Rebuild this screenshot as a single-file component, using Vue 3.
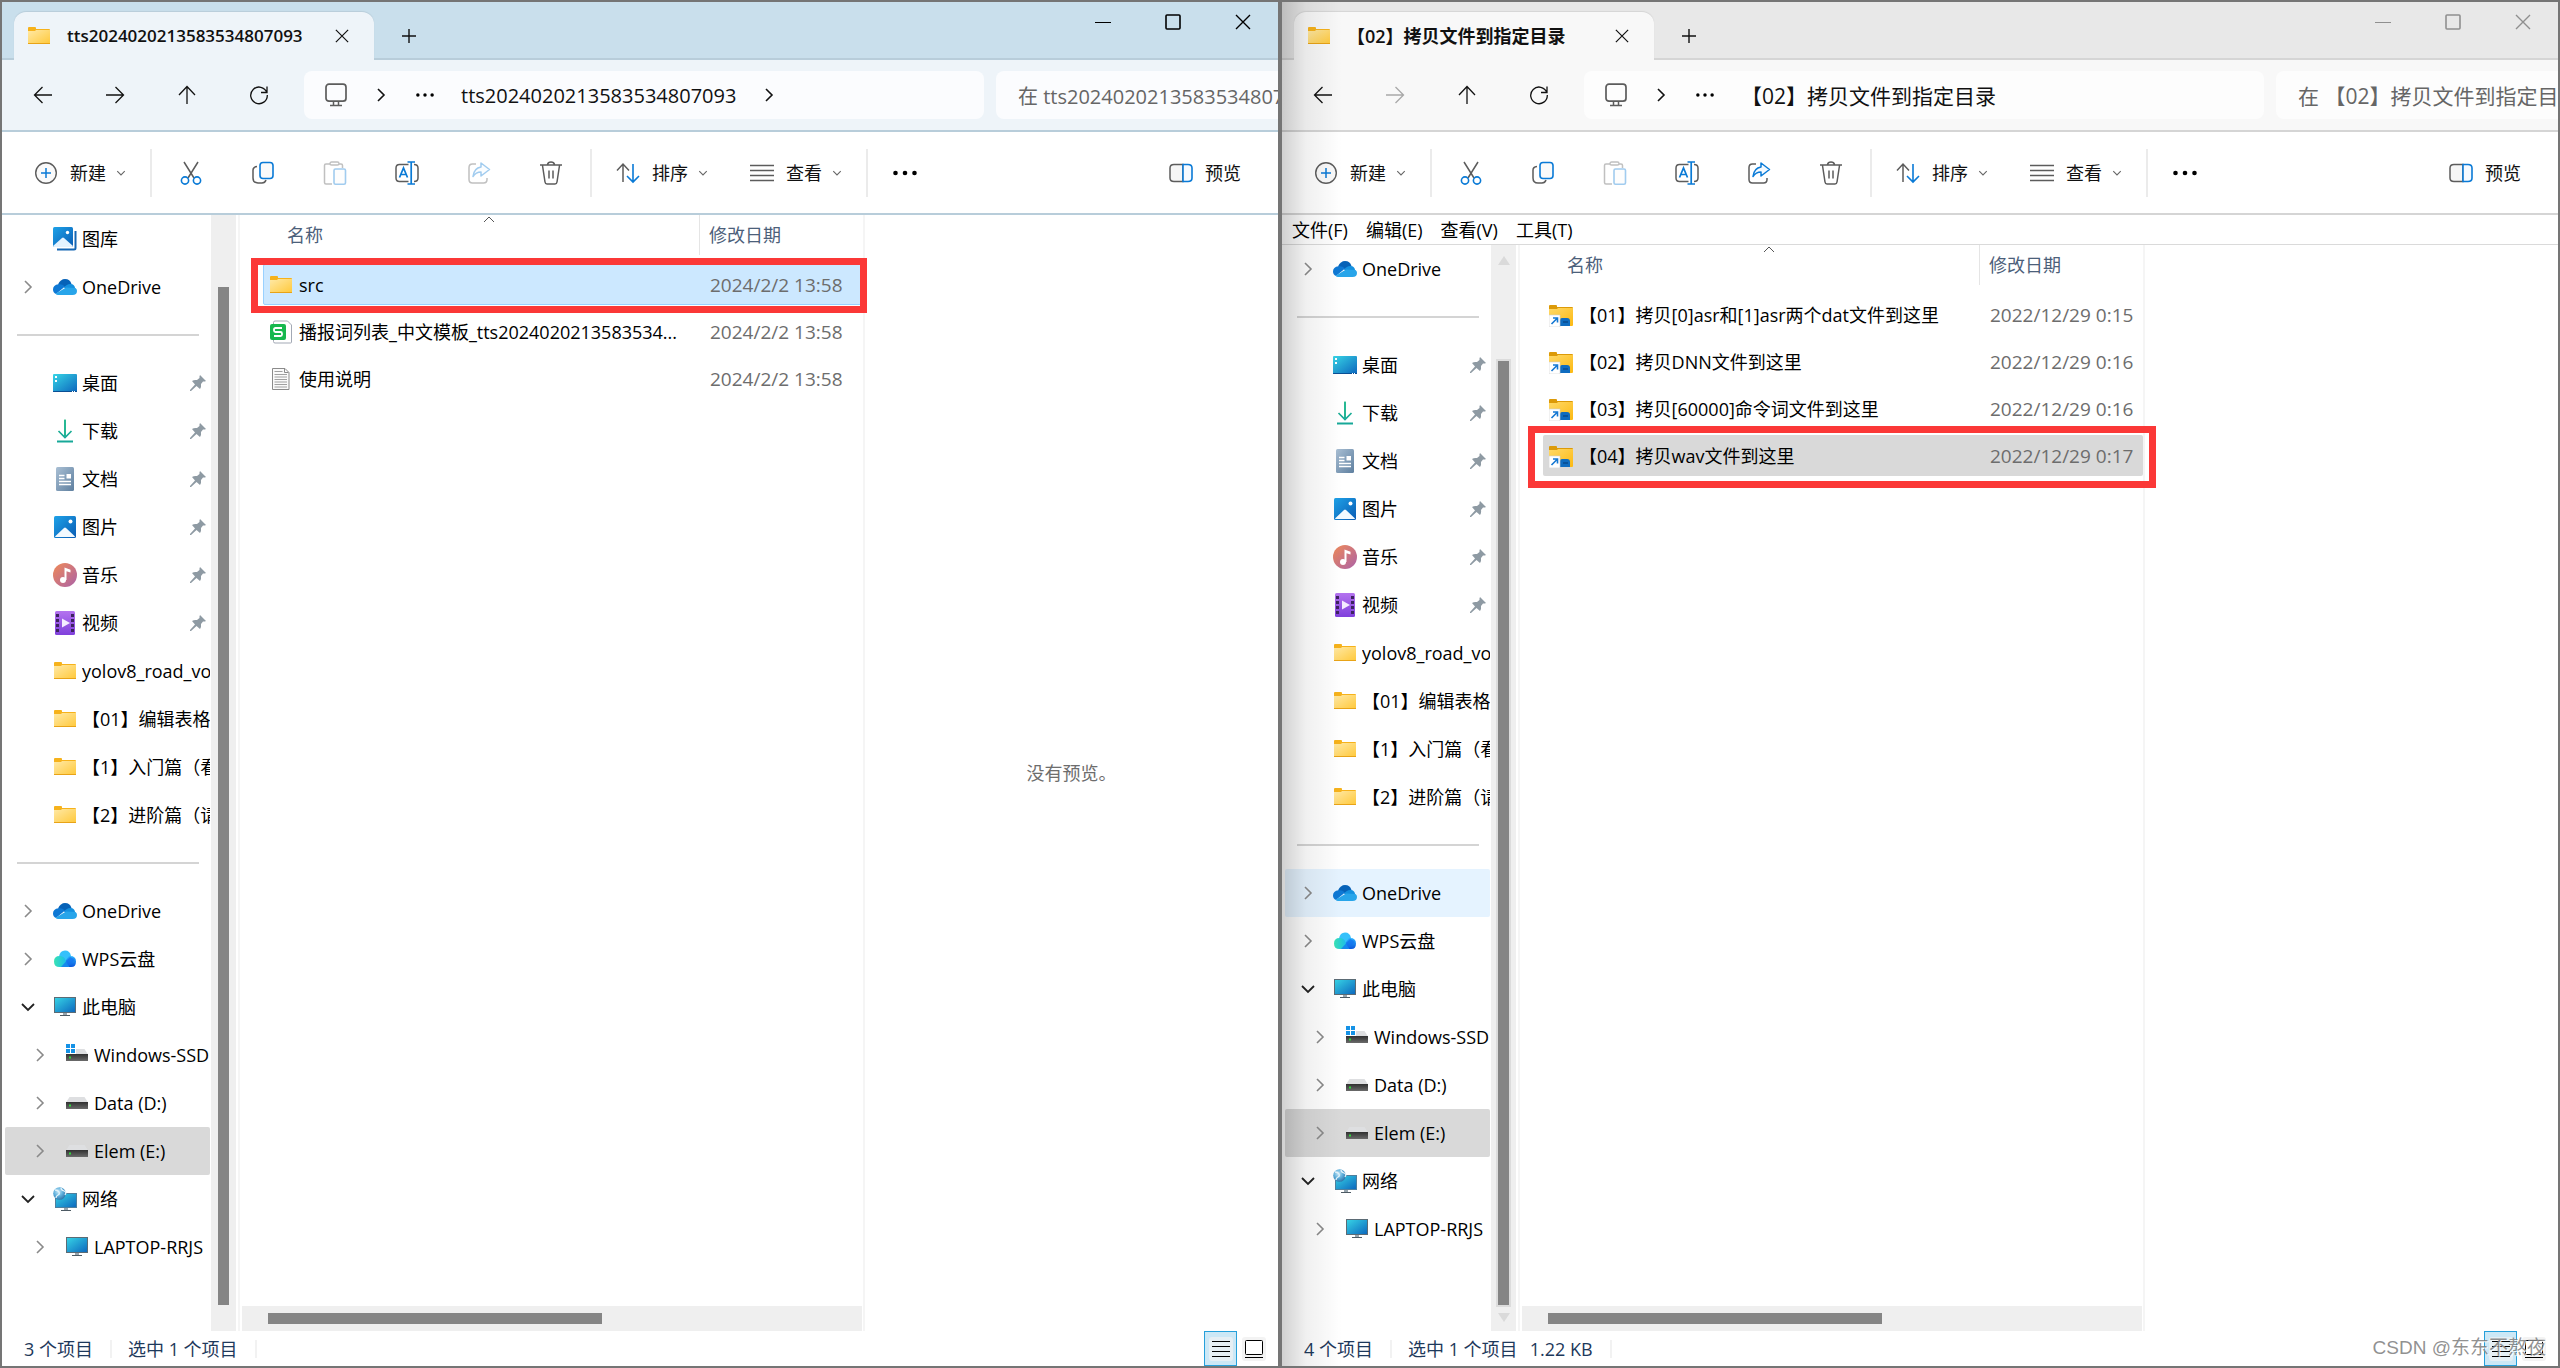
<script setup>
const commands = ['cut', 'copy', 'paste', 'rename', 'share', 'delete']

const quick = [
  { icon: 'desktop', label: '桌面', pin: true },
  { icon: 'download', label: '下载', pin: true },
  { icon: 'document', label: '文档', pin: true },
  { icon: 'pictures', label: '图片', pin: true },
  { icon: 'music', label: '音乐', pin: true },
  { icon: 'video', label: '视频', pin: true },
  { icon: 'folder', label: 'yolov8_road_vo' },
  { icon: 'folder', label: '【01】编辑表格' },
  { icon: 'folder', label: '【1】入门篇（看' },
  { icon: 'folder', label: '【2】进阶篇（请' },
]

const places = (hot) => [
  { icon: 'onedrive', label: 'OneDrive', chev: 'right', hot },
  { icon: 'wps', label: 'WPS云盘', chev: 'right' },
  { icon: 'pc', label: '此电脑', chev: 'down' },
  { icon: 'windrive', label: 'Windows-SSD', chev: 'right', sub: true },
  { icon: 'drive', label: 'Data (D:)', chev: 'right', sub: true },
  { icon: 'drive', label: 'Elem (E:)', chev: 'right', sub: true, current: true },
  { icon: 'network', label: '网络', chev: 'down' },
  { icon: 'pc', label: 'LAPTOP-RRJS', chev: 'right', sub: true },
]

const windows = [
  {
    id: 'left',
    active: true,
    title: 'tts2024020213583534807093',
    path: 'tts2024020213583534807093',
    pathMore: true,
    search: '在 tts2024020213583534807093',
    menus: [],
    off: ['paste', 'share'],
    nav: [
      { icon: 'gallery', label: '图库' },
      { icon: 'onedrive', label: 'OneDrive', chev: 'right' },
      { line: true },
      ...quick,
      { line: true },
      ...places(false),
    ],
    files: [
      { icon: 'folder', name: 'src', date: '2024/2/2 13:58', state: 'picked', mark: true },
      { icon: 'sheet', name: '播报词列表_中文模板_tts2024020213583534...', date: '2024/2/2 13:58' },
      { icon: 'text', name: '使用说明', date: '2024/2/2 13:58' },
    ],
    preview: '没有预览。',
    count: '3 个项目',
    chosen: ['选中 1 个项目'],
  },
  {
    id: 'right',
    active: false,
    title: '【02】拷贝文件到指定目录',
    path: '【02】拷贝文件到指定目录',
    pathMore: false,
    search: '在 【02】拷贝文件到指定目录',
    menus: ['文件(F)', '编辑(E)', '查看(V)', '工具(T)'],
    off: ['paste'],
    nav: [
      { icon: 'onedrive', label: 'OneDrive', chev: 'right' },
      { line: true },
      ...quick,
      { line: true },
      ...places(true),
    ],
    files: [
      { icon: 'link', name: '【01】拷贝[0]asr和[1]asr两个dat文件到这里', date: '2022/12/29 0:15' },
      { icon: 'link', name: '【02】拷贝DNN文件到这里', date: '2022/12/29 0:16' },
      { icon: 'link', name: '【03】拷贝[60000]命令词文件到这里', date: '2022/12/29 0:16' },
      { icon: 'link', name: '【04】拷贝wav文件到这里', date: '2022/12/29 0:17', state: 'dim', mark: true },
    ],
    preview: '',
    count: '4 个项目',
    chosen: ['选中 1 个项目', '1.22 KB'],
  },
]
</script>

<template>
  <svg class="defs" width="0" height="0" aria-hidden="true">
    <defs>
      <linearGradient id="g-folder" x1="0" y1="0" x2="1" y2="1"><stop offset="0" stop-color="#ffe9a6" /><stop offset="1" stop-color="#ffc93c" /></linearGradient>
      <linearGradient id="g-link" x1="0" y1="0" x2="1" y2="1"><stop offset="0" stop-color="#ffd968" /><stop offset="1" stop-color="#fcb912" /></linearGradient>
      <linearGradient id="g-blue" x1="0" y1="0" x2="1" y2="1"><stop offset="0" stop-color="#1ea2e8" /><stop offset="1" stop-color="#0a5cb4" /></linearGradient>
      <linearGradient id="g-cyan" x1="0" y1="0" x2="1" y2="1"><stop offset="0" stop-color="#37d5e6" /><stop offset="1" stop-color="#0c66bd" /></linearGradient>
      <linearGradient id="g-down" x1="0" y1="0" x2="0" y2="1"><stop offset="0" stop-color="#2fc38a" /><stop offset="1" stop-color="#12a39b" /></linearGradient>
      <linearGradient id="g-doc" x1="0" y1="0" x2="1" y2="1"><stop offset="0" stop-color="#a9bfd4" /><stop offset="1" stop-color="#5e7f9f" /></linearGradient>
      <linearGradient id="g-music" x1="0" y1="0" x2="1" y2="1"><stop offset="0" stop-color="#f08a57" /><stop offset="1" stop-color="#ab62a8" /></linearGradient>
      <linearGradient id="g-video" x1="0" y1="0" x2="0" y2="1"><stop offset="0" stop-color="#b473ef" /><stop offset="1" stop-color="#8040dc" /></linearGradient>
      <linearGradient id="g-wps" x1="0" y1="0" x2="1" y2="0"><stop offset="0" stop-color="#39e3b4" /><stop offset="1" stop-color="#15b4f5" /></linearGradient>
      <linearGradient id="g-wps2" x1="0" y1="0" x2="0" y2="1"><stop offset="0" stop-color="#2bb4ff" /><stop offset="1" stop-color="#0a56dc" /></linearGradient>
      <linearGradient id="g-drive" x1="0" y1="0" x2="0" y2="1"><stop offset="0" stop-color="#303030" /><stop offset="1" stop-color="#6b6b6b" /></linearGradient>
      <radialGradient id="g-globe" cx="0.4" cy="0.35" r="0.7"><stop offset="0" stop-color="#c8e8f7" /><stop offset="0.5" stop-color="#5fb0dc" /><stop offset="1" stop-color="#2b6fa5" /></radialGradient>
    </defs>

    <symbol id="i-folder" viewBox="0 0 24 24">
      <path d="M1 4q0-1 1-1h6q1 0 1 1v1h13q1 0 1 1v2H1z" fill="#f6b21b" />
      <path d="M1 7h7l1-1h14v13.5H1z" fill="url(#g-folder)" />
      <path d="M1 19h22v1H1z" fill="#e8a317" />
    </symbol>
    <symbol id="i-link" viewBox="0 0 24 24">
      <path d="M0 3q0-1 1-1h6q1 0 1 1v1h15q1 0 1 1v5H0z" fill="#dc9a08" />
      <path d="M0 6h8l1-1h15v17q0 1-1 1H0z" fill="url(#g-link)" />
      <path d="M11 23v-6q0-2 2-2h5q3 0 3 3v5z" fill="#0f6cc0" />
      <path d="M14 19h5" stroke="#0a4a8c" stroke-width="1.4" />
      <path d="M0 12h11v12H0z" fill="#fff" stroke="#d0d0d0" stroke-width="0.6" />
      <path d="M2.5 21l5.500-5.500M4 15h4.500v4.500" fill="none" stroke="#1578d3" stroke-width="1.6" />
    </symbol>
    <symbol id="i-sheet" viewBox="0 0 24 24">
      <path d="M6 1h12.500l4 4v17q0 1-1 1H6q-1.500 0-1.500-1.500v-19Q4.500 1 6 1z" fill="#fff" stroke="#a3a9b5" stroke-width="1" />
      <rect x="1" y="4" width="16" height="16" rx="2" fill="#17b84e" />
      <path d="M13 8H6.500Q5 8 5 9.500v1Q5 12 6.500 12h5q1.500 0 1.500 1.500v1q0 1.500-1.500 1.500H5" fill="none" stroke="#fff" stroke-width="1.800" />
    </symbol>
    <symbol id="i-text" viewBox="0 0 24 24">
      <path d="M3.500 1.500h12.500l4 4v17H3.500z" fill="#fafafa" stroke="#8b8b8b" />
      <path d="M15.500 1.500v4h4" fill="none" stroke="#8b8b8b" />
      <path d="M5.500 4.500h8M5.500 7.500h12.500M5.500 10h12.500M5.500 12.500h12.500M5.500 15h12.500M5.500 17.500h12.500M5.500 20h12.500" stroke="#a0a0a0" />
    </symbol>
    <symbol id="i-gallery" viewBox="0 0 24 24">
      <path d="M22.500 4v17q0 1.500-1.500 1.500H4" fill="none" stroke="#1466b4" stroke-width="2" />
      <rect width="20" height="20" rx="1.500" fill="url(#g-blue)" />
      <path d="M0 19l9-8q1-1 2 0l9 8q0 1-1.500 1h-17Q0 20 0 19z" fill="#e4f3ff" />
      <circle cx="14.500" cy="5.500" r="1.700" fill="#fff" />
    </symbol>
    <symbol id="i-pictures" viewBox="0 0 24 24">
      <rect x="1" y="1" width="22" height="22" rx="1.500" fill="url(#g-blue)" />
      <path d="M2 21.500l9-8.500q1-1 2 0l9 8.500q-.5.500-1 .5H3q-.5 0-1-.5z" fill="#f3faff" />
      <circle cx="17.500" cy="6.500" r="2" fill="#fff" />
    </symbol>
    <symbol id="i-onedrive" viewBox="0 0 24 24">
      <path d="M5 9.500Q7.500 4 12 4q5 0 6.500 5l-6 4z" fill="#0662b8" />
      <path d="M5.500 9.300Q9 8.700 12 11.500L3 19Q0 17.500 0 14.500q0-4.500 5.500-5.200z" fill="#0e78d4" />
      <path d="M11 12.500Q14 8.500 18 9q3 .3 4 3.500l-1 4z" fill="#1490df" />
      <path d="M2.500 18.800L13 12.500l9.500.5Q24 14 24 16q0 4-4.500 4H5q-1.500 0-2.500-1.200z" fill="#28a5ea" />
    </symbol>
    <symbol id="i-wps" viewBox="0 0 24 24">
      <path d="M6 9.500Q7 3.500 12 3.500q5 0 6 5.500l-7 7z" fill="#35c1fb" />
      <path d="M16 9q7-.5 7 5.500T17.500 20H8z" fill="url(#g-wps2)" />
      <path d="M6.500 9Q11 9 12.500 13l3.500 7H6.500Q1 20 1 14.500T6.500 9z" fill="url(#g-wps)" />
      <path d="M8 20l9-10q3 1 4.500 3L15 20z" fill="#1372ef" opacity="0.7" />
    </symbol>
    <symbol id="i-pc" viewBox="0 0 24 24">
      <path d="M10 17h4v3h-4z" fill="#98a5ae" />
      <path d="M7 20h10v1H7z" fill="#4d5a63" />
      <rect x="1.500" y="2.500" width="21" height="15" fill="url(#g-cyan)" stroke="#5b6b75" />
    </symbol>
    <symbol id="i-network" viewBox="0 0 24 24">
      <path d="M11 20h4v3h-4z" fill="#98a5ae" />
      <path d="M8 23h10v1H8z" fill="#4d5a63" />
      <rect x="2.500" y="6.500" width="21" height="14" fill="url(#g-cyan)" stroke="#4f7f9d" />
      <circle cx="6.500" cy="6.500" r="6.300" fill="url(#g-globe)" />
      <path d="M2 3q3 0 4 2t-1 3-2 3M8 1q0 2 3 3t1 4" fill="none" stroke="#e2f2fa" stroke-width="1.300" />
    </symbol>
    <symbol id="i-drive" viewBox="0 0 24 24">
      <path d="M4.500 6h15L23 11.500H1z" fill="#dedfe1" />
      <path d="M1 11h22v7H1z" fill="url(#g-drive)" />
      <path d="M4 13.500h2v2H4z" fill="#2fd83a" />
    </symbol>
    <symbol id="i-windrive" viewBox="0 0 24 24">
      <path d="M4.500 6h15L23 11.500H1z" fill="#dedfe1" />
      <path d="M1 11h22v7H1z" fill="url(#g-drive)" />
      <path d="M4 13.500h2v2H4z" fill="#2fd83a" />
      <path d="M0 0h11v11H0z" fill="#fff" />
      <path d="M1 1h4v4H1zM6 1h4v4H6zM1 6h4v4H1zM6 6h4v4H6z" fill="#1592e6" />
    </symbol>
    <symbol id="i-desktop" viewBox="0 0 24 24">
      <rect y="3" width="24" height="18" rx="1" fill="url(#g-cyan)" />
      <path d="M0 20h24v0.500q0 .5-1 .5H1q-1 0-1-.5z" fill="#0a4f94" />
      <path d="M2 5h2v2H2zM2 9h2v2H2z" fill="#fff" />
      <path d="M19 20h1v1h-1zM21 20h1v1h-1z" fill="#fff" />
    </symbol>
    <symbol id="i-download" viewBox="0 0 24 24">
      <path d="M12 .5V19M5.500 12l6.500 6.500L18.500 12" fill="none" stroke="url(#g-down)" stroke-width="1.700" />
      <path d="M11.200 1h1.600v17h-1.600z" fill="#20b592" />
      <path d="M4 21.500h16v2H4z" fill="#17a898" />
    </symbol>
    <symbol id="i-document" viewBox="0 0 24 24">
      <rect x="3" width="18" height="24" rx="1.500" fill="url(#g-doc)" />
      <path d="M6 8.500h5.500M6 11.500h5.500M6 14.500h12M6 17.500h12" stroke="#fff" stroke-width="1.300" />
      <path d="M13.500 7h4.500v4.500h-4.500z" fill="#fff" />
    </symbol>
    <symbol id="i-music" viewBox="0 0 24 24">
      <circle cx="12" cy="12" r="12" fill="url(#g-music)" />
      <circle cx="10" cy="17" r="3" fill="#fff" />
      <path d="M11.500 4.500l6 2.200v2.800l-4-1.300V17h-2z" fill="#fff" />
    </symbol>
    <symbol id="i-video" viewBox="0 0 24 24">
      <rect x="2" width="20" height="24" rx="1.500" fill="url(#g-video)" />
      <path d="M4.500 3v19M19.500 3v19" stroke="#3e2360" stroke-width="3" stroke-dasharray="3 2" />
      <path d="M9 7.500l8 4.500-8 4.500z" fill="#f4ecff" />
    </symbol>
    <symbol id="i-pin" viewBox="0 0 16 16">
      <path d="M10 0l6 6q-1.500.8-3 .5l-2 2.500q.5 3-1 5L6.500 11 1 16H0v-1l5-5.500L2 6q2-1.500 5-1l2.500-2Q9.200 1.500 10 0z" fill="#8e9aa3" />
    </symbol>

    <symbol id="i-right" viewBox="0 0 16 16"><path d="M5 2l6 6-6 6" fill="none" stroke="currentColor" stroke-width="1.600" /></symbol>
    <symbol id="i-down" viewBox="0 0 16 16"><path d="M2 5l6 6 6-6" fill="none" stroke="currentColor" stroke-width="1.800" /></symbol>
    <symbol id="i-back" viewBox="0 0 20 20"><path d="M19 10H2M9.500 2L1.500 10l8 8" fill="none" stroke="currentColor" stroke-width="1.300" /></symbol>
    <symbol id="i-forward" viewBox="0 0 20 20"><path d="M1 10h17M10.500 2l8 8-8 8" fill="none" stroke="currentColor" stroke-width="1.300" /></symbol>
    <symbol id="i-up" viewBox="0 0 20 20"><path d="M10 19V2M2 10l8-8.500L18 10" fill="none" stroke="currentColor" stroke-width="1.300" /></symbol>
    <symbol id="i-refresh" viewBox="0 0 20 20"><path d="M17.800 7.500A8.300 8.300 0 1 0 18.300 10M18 1.500v6h-6" fill="none" stroke="currentColor" stroke-width="1.300" /></symbol>
    <symbol id="i-monitor" viewBox="0 0 24 24"><rect x="2" y="1.200" width="20" height="17" rx="3" fill="none" stroke="currentColor" stroke-width="1.700" /><path d="M9.500 18v4M14.500 18v4M6 22.500h12" stroke="currentColor" stroke-width="1.500" /></symbol>
    <symbol id="i-close" viewBox="0 0 16 16"><path d="M1 1l14 14M15 1L1 15" stroke="currentColor" stroke-width="1.400" /></symbol>
    <symbol id="i-plus" viewBox="0 0 16 16"><path d="M8 1v14M1 8h14" stroke="currentColor" stroke-width="1.400" /></symbol>
    <symbol id="i-min" viewBox="0 0 16 16"><path d="M0 8.500h16" stroke="currentColor" /></symbol>
    <symbol id="i-max" viewBox="0 0 16 16"><rect x="1" y="1" width="14" height="14" rx="1" fill="none" stroke="currentColor" stroke-width="1.600" /></symbol>

    <symbol id="i-new" viewBox="0 0 24 24"><circle cx="12" cy="12" r="10.300" fill="#fafafa" stroke="#5c5c5c" stroke-width="1.400" /><path d="M12 7v10M7 12h10" stroke="#0a7ad6" stroke-width="1.500" /></symbol>
    <symbol id="i-cut" viewBox="0 0 24 24"><path d="M5 1l10 16M19 1L9 17" stroke="#5c5c5c" stroke-width="1.500" /><circle cx="6" cy="19.500" r="3.600" fill="#fff" stroke="#0a7ad6" stroke-width="1.600" /><circle cx="18" cy="19.500" r="3.600" fill="#fff" stroke="#0a7ad6" stroke-width="1.600" /></symbol>
    <symbol id="i-copy" viewBox="0 0 24 24"><path d="M6 5.500Q2 6 2 9v8q0 5 5 5h4q3 0 4-3" fill="none" stroke="#5c5c5c" stroke-width="1.500" /><rect x="9" y="1.500" width="13" height="16" rx="3" fill="#fafafa" stroke="#0a7ad6" stroke-width="1.600" /></symbol>
    <symbol id="i-paste" viewBox="0 0 24 24"><path d="M7 3H3Q1.500 3 1.500 4.500v17Q1.500 23 3 23h6M16 3h2q1.500 0 1.500 1.500V7" fill="none" stroke="#5c5c5c" stroke-width="1.500" /><rect x="7" y="1" width="9" height="3" rx="1.500" fill="none" stroke="#5c5c5c" stroke-width="1.400" /><rect x="11" y="8" width="11.500" height="15.200" rx="1.500" fill="#fafafa" stroke="#0a7ad6" stroke-width="1.600" /></symbol>
    <symbol id="i-rename" viewBox="0 0 24 24"><path d="M13.500 3.500H4.500q-3.500 0-3.500 3.500v10q0 3.500 3.500 3.500h9M19 3.500q4 0 4 3.500v10q0 3.500-4 3.500" fill="none" stroke="#5c5c5c" stroke-width="1.500" /><path d="M4.500 16.500L8.500 7l4 9.500M6 13.500h5M16.200 1v22M12.500 1H20M12.500 23H20" fill="none" stroke="#0a7ad6" stroke-width="1.700" /></symbol>
    <symbol id="i-share" viewBox="0 0 24 24"><path d="M9 3H5.500Q2 3 2 6.500v12Q2 22 5.500 22h11q3.500 0 3.500-3.500V17" fill="none" stroke="#5c5c5c" stroke-width="1.500" /><path d="M14 2l8.500 6.500L14 15v-4q-5 0-8 4.500Q7 7 14 6z" fill="#f4faff" stroke="#0a7ad6" stroke-width="1.500" stroke-linejoin="round" /></symbol>
    <symbol id="i-delete" viewBox="0 0 24 24"><path d="M1 4h22M3.500 4.500L6 21q.3 2 2 2h8q1.700 0 2-2l2.500-16.500M8.500 3.500Q9 1 12 1t3.500 2.500M10 9.500v8M14 9.500v8" fill="none" stroke="#5c5c5c" stroke-width="1.500" /></symbol>
    <symbol id="i-sort" viewBox="0 0 24 24"><path d="M7 21V3M1 9.500L7 3l6 6.500" fill="none" stroke="#5c5c5c" stroke-width="1.500" /><path d="M17 3v18M11 15l6 6 6-6" fill="none" stroke="#0a7ad6" stroke-width="1.600" /></symbol>
    <symbol id="i-view" viewBox="0 0 24 24"><path d="M0 4.500h24M0 9.500h24M0 14.500h24M0 19.500h24" stroke="#5c5c5c" stroke-width="1.400" /></symbol>
    <symbol id="i-preview" viewBox="0 0 24 24"><path d="M14 3.500H5Q1 3.500 1 7v10q0 3.500 4 3.500h9z" fill="#f6f6f6" stroke="#5c5c5c" stroke-width="1.500" /><path d="M14 3.500h5q4 0 4 3.500v10q0 3.500-4 3.500h-5z" fill="#f6faff" stroke="#0a7ad6" stroke-width="1.600" /></symbol>
    <symbol id="i-dots" viewBox="0 0 24 24"><circle cx="2.500" cy="12" r="2.300" /><circle cx="12" cy="12" r="2.300" /><circle cx="21.500" cy="12" r="2.300" /></symbol>
    <symbol id="i-details" viewBox="0 0 24 24"><rect width="24" height="24" rx="3" fill="#e6eff4" /><path d="M3 4.500h18M3 9.500h18M3 14.500h18M3 19.500h18" stroke="#000" /></symbol>
    <symbol id="i-large" viewBox="0 0 24 24"><rect width="24" height="24" rx="3" fill="#f3f3f3" /><rect x="3.500" y="3.500" width="17" height="14" rx="1" fill="#fff" stroke="#000" /><path d="M3 20.500h18" stroke="#000" /></symbol>
  </svg>

  <main class="screen">
    <section v-for="w in windows" :key="w.id" class="window" :class="[w.id, { idle: !w.active }]">
      <header class="titlebar">
        <div class="tab">
          <svg class="ic"><use href="#i-folder" /></svg>
          <span class="tab-title">{{ w.title }}</span>
          <button class="tab-close" aria-label="关闭标签页"><svg class="s14"><use href="#i-close" /></svg></button>
        </div>
        <button class="tab-add" aria-label="新标签页"><svg class="s16"><use href="#i-plus" /></svg></button>
        <div class="controls">
          <button aria-label="最小化"><svg class="s16"><use href="#i-min" /></svg></button>
          <button aria-label="最大化"><svg class="s16"><use href="#i-max" /></svg></button>
          <button aria-label="关闭"><svg class="s16"><use href="#i-close" /></svg></button>
        </div>
      </header>

      <div class="navbar">
        <div class="nav-buttons">
          <button aria-label="后退"><svg class="s20"><use href="#i-back" /></svg></button>
          <button aria-label="前进" :disabled="!w.active"><svg class="s20"><use href="#i-forward" /></svg></button>
          <button aria-label="上移"><svg class="s20"><use href="#i-up" /></svg></button>
          <button aria-label="刷新"><svg class="s20"><use href="#i-refresh" /></svg></button>
        </div>
        <div class="address">
          <svg class="ic grey"><use href="#i-monitor" /></svg>
          <svg class="s16"><use href="#i-right" /></svg>
          <svg class="s18"><use href="#i-dots" /></svg>
          <span class="path">{{ w.path }}</span>
          <svg v-if="w.pathMore" class="s16"><use href="#i-right" /></svg>
        </div>
        <input class="search" type="text" :placeholder="w.search" aria-label="搜索" />
      </div>

      <div class="toolbar">
        <button class="wide"><svg class="ic"><use href="#i-new" /></svg>新建<svg class="s10"><use href="#i-down" /></svg></button>
        <span class="sep"></span>
        <button v-for="c in commands" :key="c" class="square" :aria-label="c" :disabled="w.off.includes(c)">
          <svg class="ic"><use :href="'#i-' + c" /></svg>
        </button>
        <span class="sep"></span>
        <button class="wide"><svg class="ic"><use href="#i-sort" /></svg>排序<svg class="s10"><use href="#i-down" /></svg></button>
        <button class="wide"><svg class="ic"><use href="#i-view" /></svg>查看<svg class="s10"><use href="#i-down" /></svg></button>
        <span class="sep"></span>
        <button class="more" aria-label="更多"><svg class="ic"><use href="#i-dots" /></svg></button>
        <button class="wide end"><svg class="ic"><use href="#i-preview" /></svg>预览</button>
      </div>

      <nav v-if="w.menus.length" class="menubar">
        <button v-for="m in w.menus" :key="m">{{ m }}</button>
      </nav>

      <div class="body">
        <ul class="tree">
          <li v-for="(n, i) in w.nav" :key="i" :class="{ current: n.current, hot: n.hot, sub: n.sub, line: n.line }">
            <template v-if="!n.line">
              <span class="chev" :class="n.chev"><svg v-if="n.chev" class="s16"><use :href="'#i-' + n.chev" /></svg></span>
              <svg class="ic"><use :href="'#i-' + n.icon" /></svg>
              <span class="label">{{ n.label }}</span>
              <svg v-if="n.pin" class="s16 pin"><use href="#i-pin" /></svg>
            </template>
          </li>
        </ul>
        <div class="vscroll"><span class="thumb"></span></div>

        <div class="list">
          <table>
            <thead>
              <tr>
                <th class="c-name">名称<svg class="sorted" viewBox="0 0 12 7"><path d="M1 6l5-5 5 5" fill="none" stroke="#555" /></svg></th>
                <th class="c-date">修改日期</th>
              </tr>
            </thead>
            <tbody>
              <tr v-for="f in w.files" :key="f.name" :class="f.state">
                <td class="c-name"><svg class="ic"><use :href="'#i-' + f.icon" /></svg>{{ f.name }}</td>
                <td class="c-date">{{ f.date }}<span v-if="f.mark" class="mark"></span></td>
              </tr>
            </tbody>
          </table>
          <div class="hscroll"><span class="thumb"></span></div>
        </div>

        <aside class="preview">{{ w.preview }}</aside>
      </div>

      <footer class="status">
        <span class="count">{{ w.count }}</span>
        <span class="chosen"><span v-for="c in w.chosen" :key="c">{{ c }}</span></span>
        <div class="views">
          <button class="on" aria-label="详细信息"><svg class="ic"><use href="#i-details" /></svg></button>
          <button aria-label="大图标"><svg class="ic"><use href="#i-large" /></svg></button>
        </div>
      </footer>
    </section>
    <span class="credit">CSDN @东东不熬夜</span>
  </main>
</template>

<style>
body {
  margin: 0;
}
</style>

<style scoped>
.defs {
  position: absolute;
}
.screen {
  position: relative;
  display: flex;
  height: 100vh;
  font: 18px/24px "Open Sans", "Noto Sans CJK SC", sans-serif;
  color: #111;
}
.screen * {
  box-sizing: border-box;
}
svg {
  flex: none;
  display: block;
}
button {
  display: flex;
  align-items: center;
  justify-content: center;
  padding: 0;
  border: 0;
  background: none;
  font: inherit;
  color: inherit;
}
.ic {
  width: 24px;
  height: 24px;
}
.s10 {
  width: 10px;
  height: 10px;
  color: #666;
}
.s14 {
  width: 14px;
  height: 14px;
}
.s16 {
  width: 16px;
  height: 16px;
}
.s18 {
  width: 18px;
  height: 18px;
}
.s20 {
  width: 20px;
  height: 20px;
}

.window {
  --strip: #c9dfec;
  --chrome: #eef4f9;
  --rule: #b8cdda;
  --field: #fbfcfe;
  position: relative;
  flex: 1 1 0;
  min-width: 0;
  display: flex;
  flex-direction: column;
  border: 2px solid #757575;
  background: #fff;
  overflow: hidden;
}
.idle {
  --strip: #e8e8e8;
  --chrome: #f8f8f8;
  --rule: #d5d5d5;
  --field: #fdfdfd;
}
/* shadow cast by the active window on its neighbour */
.idle::after {
  content: "";
  position: absolute;
  inset: 0 auto 0 0;
  width: 60px;
  background: linear-gradient(90deg, rgba(0, 0, 0, 0.18), rgba(0, 0, 0, 0.06) 40%, transparent);
  pointer-events: none;
}

.titlebar {
  display: flex;
  height: 58px;
  padding-left: 12px;
  background: var(--strip);
  border-bottom: 2px solid var(--rule);
}
.tab {
  display: flex;
  align-items: center;
  width: 360px;
  height: 48px;
  margin-top: 10px;
  padding: 0 24px 0 13px;
  border-radius: 12px 12px 0 0;
  background: var(--chrome);
  box-shadow: 0 -1px 1px var(--rule);
}
.tab-title {
  flex: 1;
  margin-left: 16px;
  font-weight: 600;
  white-space: nowrap;
}
.left .tab-title {
  font-size: 17px;
}
.tab-close {
  width: 16px;
}
.tab-add {
  width: 70px;
  height: 68px;
}
.controls {
  display: flex;
  height: 40px;
  margin-left: auto;
}
.controls button {
  width: 70px;
  color: #000;
}
.idle .controls button {
  color: #8f8f8f;
}

.navbar {
  display: flex;
  align-items: center;
  height: 72px;
  padding-left: 5px;
  background: var(--chrome);
  border-bottom: 2px solid var(--rule);
}
.nav-buttons {
  display: flex;
}
.nav-buttons button {
  width: 72px;
  height: 48px;
}
.nav-buttons button:disabled {
  color: #a8a8a8;
}
.address {
  display: flex;
  align-items: center;
  width: 680px;
  height: 48px;
  margin-left: 9px;
  padding-left: 20px;
  border-radius: 8px;
  background: var(--field);
}
.address .s16 {
  margin-left: 25px;
}
.address .s18 {
  margin: 0 27px;
}
.path {
  padding-top: 2px;
  font-size: 20px;
  white-space: nowrap;
}
.right .path,
.right .search {
  font-size: 21px;
}
.grey {
  color: #5c5c5c;
}
.search {
  flex: 1;
  min-width: 0;
  height: 48px;
  margin-left: 12px;
  padding: 2px 0 0 22px;
  border: 0;
  border-radius: 8px 0 0 8px;
  background: var(--field);
  font: inherit;
  font-size: 20px;
}
.search::placeholder {
  color: #666;
  opacity: 1;
}

.toolbar {
  display: flex;
  align-items: center;
  height: 83px;
  padding: 0 16px 0 11px;
  border-bottom: 2px solid var(--rule);
}
.toolbar button {
  height: 48px;
}
.wide {
  gap: 12px;
  padding: 0 21px;
}
.wide .s10 {
  margin-left: -2px;
}
.square {
  width: 72px;
}
.more {
  width: 68px;
}
.square:disabled .ic {
  opacity: 0.38;
}
.sep {
  width: 2px;
  height: 48px;
  margin: 0 3px;
  background: #ebebeb;
}
.end {
  margin-left: auto;
}

.menubar {
  display: flex;
  gap: 18px;
  height: 30px;
  padding-left: 10px;
  border-bottom: 1px solid #dadada;
  color: #000;
}

.body {
  flex: 1;
  min-height: 0;
  display: flex;
}
.tree {
  width: 209px;
  margin: 0;
  padding: 0 1px 0 3px;
  list-style: none;
  overflow: hidden;
  color: #000;
}
.tree li {
  display: flex;
  align-items: center;
  height: 48px;
  padding: 0 0 0 12px;
  border-radius: 2px;
}
.tree .sub {
  padding-left: 24px;
}
.tree .current {
  background: #d9d9d9;
}
.tree .hot {
  background: #e5f3ff;
}
.tree .line::before {
  content: "";
  width: 182px;
  height: 2px;
  background: #d4d4d4;
}
.chev {
  flex: none;
  display: flex;
  justify-content: center;
  width: 22px;
  margin-right: 14px;
  color: #8a8a8a;
}
.chev.down {
  color: #222;
}
.label {
  flex: 1;
  min-width: 0;
  margin-left: 5px;
  white-space: nowrap;
  overflow: hidden;
}
.pin {
  margin-right: 4px;
}

.vscroll {
  flex: none;
  display: flex;
  justify-content: center;
  width: 25px;
  padding: 72px 0 26px;
  background: #efefef;
}
.vscroll .thumb {
  width: 11px;
  background: #858585;
}
.right .vscroll {
  position: relative;
  padding-top: 116px;
}
.right .vscroll .thumb {
  box-shadow: 0 0 0 2px #dcdcdc;
}
.right .vscroll::before,
.right .vscroll::after {
  content: "";
  position: absolute;
  left: 7px;
  border: 6px solid transparent;
}
.right .vscroll::before {
  top: 5px;
  border-bottom: 9px solid #dadada;
}
.right .vscroll::after {
  bottom: 3px;
  border-top: 9px solid #dadada;
}

.list {
  flex: none;
  display: flex;
  flex-direction: column;
  justify-content: space-between;
  width: 627px;
  margin-left: 2px;
  border: solid #f5f5f5;
  border-width: 0 2px;
}
table {
  display: block;
}
thead,
tbody {
  display: block;
}
tr {
  position: relative;
  display: flex;
  align-items: center;
  height: 41px;
  margin: 0 0 6px 23px;
  border: 1px solid transparent;
  border-radius: 2px;
}
thead tr {
  height: 40px;
  margin-bottom: 9px;
  border: 0;
}
.picked {
  background: #cce8ff;
  border-color: #99d1ff;
}
.dim {
  background: #d9d9d9;
}
th,
td {
  padding: 0;
  font-weight: 400;
  text-align: left;
  white-space: nowrap;
}
th {
  height: 40px;
  line-height: 40px;
  color: #4c607a;
}
.c-name {
  display: flex;
  align-items: center;
  gap: 6px;
  flex: none;
  width: 437px;
  padding-left: 5px;
  color: #000;
}
th.c-name {
  position: relative;
  padding-left: 24px;
  border-right: 1px solid #e5e5e5;
  color: #4c607a;
}
.sorted {
  position: absolute;
  left: 220px;
  top: 1px;
  width: 12px;
  height: 7px;
}
.c-date {
  padding-left: 9px;
}
td.c-date {
  font-size: 19px;
  color: #6d6d6d;
}
.mark {
  position: absolute;
  inset: -7px -5px -9px -13px;
  border: 7px solid #fb3837;
}
.right .mark {
  inset: -10px -14px -13px -16px;
}

.hscroll {
  display: flex;
  align-items: center;
  height: 25px;
  margin: 0 1px 0 2px;
  padding-left: 26px;
  background: #efefef;
}
.hscroll .thumb {
  width: 334px;
  height: 11px;
  background: #858585;
}
.preview {
  flex: 1;
  display: flex;
  align-items: center;
  justify-content: center;
  color: #6d6d6d;
}

.status {
  display: flex;
  align-items: center;
  height: 35px;
  padding: 0 12px 0 22px;
  color: #1e395b;
  white-space: nowrap;
}
.count,
.chosen {
  display: flex;
  gap: 12px;
  padding-right: 17px;
  border-right: 2px solid #f2f2f2;
  line-height: 18px;
}
.chosen {
  padding-left: 16px;
}
.views {
  display: flex;
  gap: 5px;
  height: 35px;
  margin-left: auto;
}
.views button {
  height: 35px;
}
.views .on {
  width: 33px;
  border: 1px solid #26a0da;
  background: #cce8f6;
}

.credit {
  position: absolute;
  right: 14px;
  bottom: 8px;
  font: 19px/24px "Liberation Sans", "Noto Sans CJK SC", sans-serif;
  color: rgba(125, 125, 125, 0.85);
  text-shadow: 1px 1px 0 rgba(255, 255, 255, 0.8);
}
</style>
